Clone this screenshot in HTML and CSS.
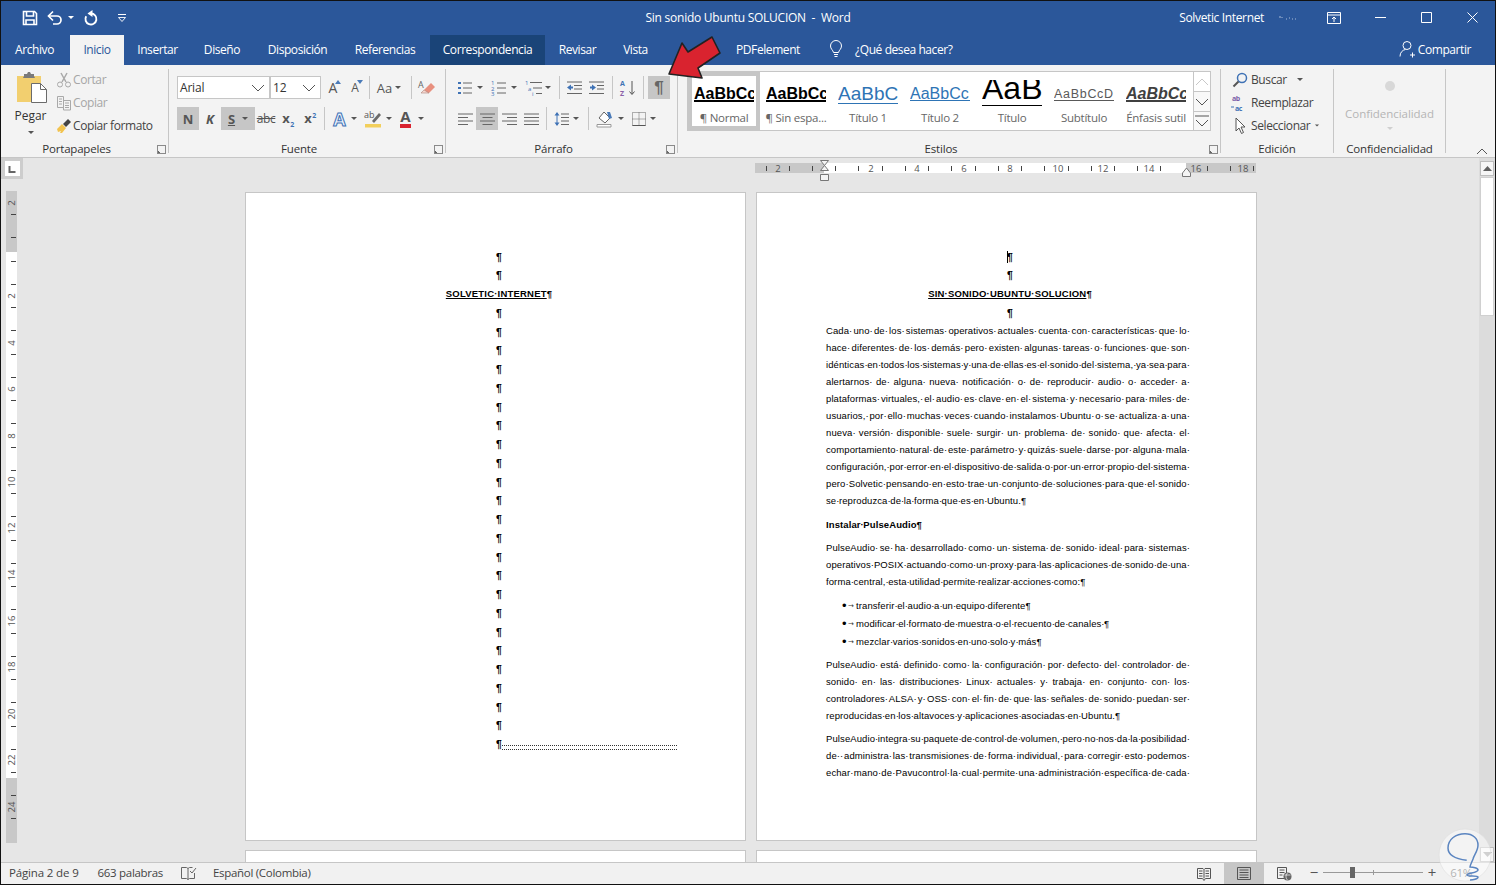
FILE: index.html
```html
<!DOCTYPE html>
<html lang="es">
<head>
<meta charset="utf-8">
<title>Sin sonido Ubuntu SOLUCION - Word</title>
<link rel="stylesheet" href="styles.css">
</head>
<body>
<div class="window">

  <header class="titlebar">
    <div class="qat">
      <span class="qbtn save"><svg width="16" height="16" viewBox="0 0 16 16"><path d="M1.500 1.500h11l2 2v11h-13z" fill="none" stroke="#fff" stroke-width="1.600"/><path d="M4.500 2v4h7V2M4 15v-5h8v5" fill="none" stroke="#fff" stroke-width="1.600"/></svg></span>
      <span class="qbtn undo"><svg width="16" height="16" viewBox="0 0 16 16"><path d="M2 6h8a4 4 0 0 1 0 8H6" fill="none" stroke="#fff" stroke-width="1.700"/><path d="M6 1.500 1.500 6 6 10.500" fill="none" stroke="#fff" stroke-width="1.700"/></svg></span>
      <i class="caret white"></i>
      <span class="qbtn redo"><svg width="16" height="16" viewBox="0 0 16 16"><path d="M8 3.500A5.500 5.500 0 1 1 3.200 6.200" fill="none" stroke="#fff" stroke-width="1.900"/><path d="M9.500 0v7L4.500 3.500z" fill="#fff"/></svg></span>
      <span class="qbtn custom"><svg width="10" height="10" viewBox="0 0 10 10"><path d="M1 1.500h8" stroke="#fff"/><path d="M1.500 4.500h7L5 8.500z" fill="none" stroke="#fff" stroke-width=".9"/></svg></span>
    </div>
    <div class="doc-title">Sin sonido Ubuntu SOLUCION &nbsp;-&nbsp; Word</div>
    <div class="winbar">
      <span class="user">Solvetic Internet</span>
      <svg class="blur" width="18" height="6" viewBox="0 0 18 6"><path d="M1 1v2M3 2v1M7 4h1M10 3h1M13 4h1M16 4h1" stroke="#a9bcd8"/></svg>
      <span class="wbtn"><svg width="14" height="12" viewBox="0 0 14 12"><path d="M.5.500h13v11H.5zM1 3h12" fill="none" stroke="#fff"/><path d="M7 10V5M5 7l2-2 2 2" fill="none" stroke="#fff"/></svg></span>
      <span class="wbtn"><svg width="11" height="11" viewBox="0 0 11 11"><path d="M0 5.500h11" stroke="#fff"/></svg></span>
      <span class="wbtn"><svg width="11" height="11" viewBox="0 0 11 11"><path d="M.5.500h10v10H.5z" fill="none" stroke="#fff"/></svg></span>
      <span class="wbtn"><svg width="11" height="11" viewBox="0 0 11 11"><path d="M.5.500l10 10M10.500.500l-10 10" fill="none" stroke="#fff"/></svg></span>
    </div>
  </header>

  <nav class="tabs">
    <span class="tab t-archivo">Archivo</span>
    <span class="tab t-inicio active">Inicio</span>
    <span class="tab t-insertar">Insertar</span>
    <span class="tab t-diseno">Diseño</span>
    <span class="tab t-disp">Disposición</span>
    <span class="tab t-ref">Referencias</span>
    <span class="tab t-corr current">Correspondencia</span>
    <span class="tab t-rev">Revisar</span>
    <span class="tab t-vista">Vista</span>
    <span class="tab t-pdf">PDFelement</span>
    <span class="tell">
      <svg width="14" height="18" viewBox="0 0 14 18"><path d="M4.500 12.500C4 10 1.500 9 1.500 6a5.500 5.500 0 0 1 11 0c0 3-2.500 4-3 6.500zM5 14.500h4M5.500 16.500h3" fill="none" stroke="#fff"/></svg>
      <span>¿Qué desea hacer?</span>
    </span>
    <span class="share">
      <svg width="16" height="18" viewBox="0 0 16 18"><circle cx="8" cy="5.500" r="4" fill="none" stroke="#fff"/><path d="M1 16.500c0-4 2.500-6.500 5.500-7M11 15h5M13.500 12.500v5" fill="none" stroke="#fff"/></svg>
      <span>Compartir</span>
    </span>
  </nav>

  <section class="ribbon">
    <div class="group g-clip">
      <div class="clip-body">
        <div class="paste">
          <svg class="paste-icon" width="32" height="34" viewBox="0 0 32 34"><path d="M1 4h24v26H1z" fill="#f2cf6f"/><path d="M8 4V2h3l1-2h2l1 2h3v2l1 2H7z" fill="#7a7a7a"/><path d="M15.500 11.500h9l6 6v13h-15z" fill="#fff" stroke="#6b6b6b"/><path d="M24.500 11.500v6h6" fill="none" stroke="#6b6b6b"/></svg>
          <span class="paste-label">Pegar</span>
          <i class="caret"></i>
        </div>
        <div class="small-list">
          <div class="small off"><svg width="16" height="16" viewBox="0 0 16 16"><path d="M5 1l5 9M11 1 6 10" stroke="#a9a9a9" stroke-width="1.500" fill="none"/><circle cx="4" cy="12.500" r="2.500" fill="none" stroke="#a9a9a9"/><circle cx="12" cy="12.500" r="2.500" fill="none" stroke="#a9a9a9"/></svg><span>Cortar</span></div>
          <div class="small off"><svg width="16" height="16" viewBox="0 0 16 16"><path d="M1.500 1.500h6v11h-6zM7.500 5.500h7v9.500h-7zM3 4h3M3 6.500h3M3 9h3M9 8h4M9 10.500h4M9 12.500h4" fill="none" stroke="#a9a9a9"/></svg><span>Copiar</span></div>
          <div class="small"><svg width="16" height="16" viewBox="0 0 16 16"><path d="M1 11l5-5 4 4-4 5H4l1-2-3 1z" fill="#f2c34f"/><path d="M7 6l5-5 3 3-5 5z" fill="#444"/></svg><span>Copiar formato</span></div>
        </div>
      </div>
      <div class="glabel has-launch">Portapapeles<i class="launch"></i></div>
    </div>

    <div class="group g-font">
      <div class="rows">
        <div class="row">
          <div class="combo c-font">Arial<svg width="14" height="8" viewBox="0 0 14 8"><path d="M1 1l6 6 6-6" fill="none" stroke="#555"/></svg></div>
          <div class="combo c-size">12<svg width="14" height="8" viewBox="0 0 14 8"><path d="M1 1l6 6 6-6" fill="none" stroke="#555"/></svg></div>
          <span class="btn"><span class="grow-a">A</span><svg class="mark" width="6" height="4" viewBox="0 0 6 4"><path d="M0 4l3-4 3 4z" fill="#4a7ab8"/></svg></span>
          <span class="btn"><span class="shrink-a">A</span><svg class="mark" width="6" height="4" viewBox="0 0 6 4"><path d="M0 0l3 4 3-4z" fill="#4a7ab8"/></svg></span>
          <i class="vsep s-a"></i>
          <span class="btn b-aa"><span class="aa">Aa</span><i class="caret"></i></span>
          <i class="vsep s-b"></i>
          <span class="btn"><svg width="18" height="16" viewBox="0 0 18 16"><path d="M6 10l7-7 4 4-6 6H9z" fill="#e8907f"/><path d="M3 13l3-3 5 3H7z" fill="#f6d8d0" stroke="#b0837a" stroke-width=".6"/><text x="0" y="8" class="svg-a">A</text></svg></span>
        </div>
        <div class="row">
          <span class="btn on fmt bold-n">N</span>
          <span class="btn fmt ital">K</span>
          <span class="btn on b-s"><span class="fmt under">S</span><i class="caret"></i></span>
          <span class="btn fmt-small strike">abc</span>
          <span class="btn fmt-small"><span>x<sub class="blue-sub">2</sub></span></span>
          <span class="btn fmt-small"><span>x<sup class="blue-sub">2</sup></span></span>
          <i class="vsep s-c"></i>
          <span class="btn b-eff"><span class="eff">A</span><i class="caret"></i></span>
          <span class="btn b-high"><svg width="18" height="18" viewBox="0 0 18 18"><text x="0" y="8" class="svg-ab">ab</text><path d="M8 11l7-8 2 2-7 8z" fill="#6b6b6b"/><path d="M1 14h16v3.500H1z" fill="#f2cf5b"/></svg><i class="caret"></i></span>
          <span class="btn b-color"><span class="colora">A</span><i class="caret"></i></span>
        </div>
      </div>
      <div class="glabel has-launch">Fuente<i class="launch"></i></div>
    </div>

    <div class="group g-par">
      <div class="rows">
        <div class="row">
          <span class="btn b-list"><svg width="16" height="16" viewBox="0 0 16 16"><path d="M1 2h3v2H1zM1 7h3v2H1zM1 12h3v2H1z" fill="#3f72b5"/><path d="M6 3h9M6 8h9M6 13h9" stroke="#666"/></svg><i class="caret"></i></span>
          <span class="btn b-list"><svg width="16" height="16" viewBox="0 0 16 16"><text x="0" y="5" class="svg-num">1</text><text x="0" y="10.500" class="svg-num">2</text><text x="0" y="16" class="svg-num">3</text><path d="M6 3h9M6 8h9M6 13h9" stroke="#666"/></svg><i class="caret"></i></span>
          <span class="btn b-list3"><svg width="17" height="16" viewBox="0 0 17 16"><text x="0" y="5" class="svg-num">1</text><text x="3" y="10.500" class="svg-num">a</text><text x="7" y="16" class="svg-num">i</text><path d="M5 2.500h12M8 8h9M11 13.500h6" stroke="#666"/></svg><i class="caret"></i></span>
          <i class="vsep s-d"></i>
          <span class="btn"><svg width="16" height="14" viewBox="0 0 16 14"><path d="M1 1h15M8 4.500h8M8 8h8M1 12.500h15" stroke="#666"/><path d="M1 6.500 5 3.500v2h2v2H5v2z" fill="#3f72b5"/></svg></span>
          <span class="btn b-inc"><svg width="16" height="14" viewBox="0 0 16 14"><path d="M0 1h15M8 4.500h7M8 8h7M0 12.500h15" stroke="#666"/><path d="M7 6.500 3 3.500v2H1v2h2v2z" fill="#3f72b5"/></svg></span>
          <i class="vsep s-e"></i>
          <span class="btn b-sort"><svg width="16" height="18" viewBox="0 0 16 18"><text x="0" y="7" class="svg-az a">A</text><text x="0" y="17" class="svg-az z">Z</text><path d="M12 2v13M9.500 12.500 12 15.500l2.500-3" fill="none" stroke="#555"/></svg></span>
          <i class="vsep s-f"></i>
          <span class="btn on pil">¶</span>
        </div>
        <div class="row r-align">
          <span class="btn"><svg width="15" height="12" viewBox="0 0 15 12"><path d="M0 1h15M0 4.500h10M0 8h15M0 11.500h10" stroke="#666"/></svg></span>
          <span class="btn on"><svg width="15" height="12" viewBox="0 0 15 12"><path d="M0 1h15M2.500 4.500h10M0 8h15M2.500 11.500h10" stroke="#666"/></svg></span>
          <span class="btn"><svg width="15" height="12" viewBox="0 0 15 12"><path d="M0 1h15M5 4.500h10M0 8h15M5 11.500h10" stroke="#666"/></svg></span>
          <span class="btn"><svg width="15" height="12" viewBox="0 0 15 12"><path d="M0 1h15M0 4.500h15M0 8h15M0 11.500h15" stroke="#666"/></svg></span>
          <i class="vsep s-g"></i>
          <span class="btn b-list3"><svg width="16" height="16" viewBox="0 0 16 16"><path d="M3 2v12" stroke="#3f72b5"/><path d="M.5 4.500 3 1l2.500 3.500zM.5 11.500 3 15l2.500-3.500z" fill="#3f72b5"/><path d="M7 3h8M7 6.500h8M7 10h8M7 13.500h8" stroke="#666"/></svg><i class="caret"></i></span>
          <i class="vsep s-h"></i>
          <span class="btn b-list"><svg width="18" height="18" viewBox="0 0 18 18"><path d="M3 8l5-6 6 6-5 5z" fill="#fff" stroke="#666"/><path d="M11 2h3l2 6-3 1z" fill="#4a7ab8"/><path d="M1 14.500h14v2.500H1z" fill="#fff" stroke="#999"/></svg><i class="caret"></i></span>
          <span class="btn b-list"><svg width="14" height="14" viewBox="0 0 14 14"><path d="M.5.500h13v13H.5zM7 .5v13M.5 7h13" fill="none" stroke="#666" stroke-dasharray="1 1"/><path d="M.5 13.500h13" stroke="#555"/></svg><i class="caret"></i></span>
        </div>
      </div>
      <div class="glabel has-launch">Párrafo<i class="launch"></i></div>
    </div>

    <div class="group g-styles">
      <div class="gallery">
        <div class="styles-list">
          <div class="style selected"><div class="pv pv-normal">AaBbCc</div><div class="sl">¶ Normal</div></div>
          <div class="style"><div class="pv pv-normal">AaBbCc</div><div class="sl">¶ Sin espa...</div></div>
          <div class="style"><div class="pv pv-t1">AaBbC</div><div class="sl">Título 1</div></div>
          <div class="style"><div class="pv pv-t2">AaBbCc</div><div class="sl">Título 2</div></div>
          <div class="style"><div class="pv pv-title">AaB</div><div class="sl">Título</div></div>
          <div class="style"><div class="pv pv-sub">AaBbCcD</div><div class="sl">Subtítulo</div></div>
          <div class="style"><div class="pv pv-em">AaBbCc</div><div class="sl">Énfasis sutil</div></div>
        </div>
        <div class="gscroll">
          <span class="gs up"><svg width="14" height="8" viewBox="0 0 14 8"><path d="M1 7l6-6 6 6" fill="none" stroke="#c8c8c8"/></svg></span>
          <span class="gs"><svg width="14" height="8" viewBox="0 0 14 8"><path d="M1 1l6 6 6-6" fill="none" stroke="#555"/></svg></span>
          <span class="gs"><svg width="14" height="12" viewBox="0 0 14 12"><path d="M0 1h14M1 5l6 6 6-6" fill="none" stroke="#555"/></svg></span>
        </div>
      </div>
      <div class="glabel has-launch">Estilos<i class="launch"></i></div>
    </div>

    <div class="group g-edit">
      <div class="edit-list">
        <div class="small"><svg width="16" height="16" viewBox="0 0 16 16"><circle cx="10" cy="6" r="4.500" fill="none" stroke="#3f72b5" stroke-width="1.500"/><path d="M6.500 9.500 1.500 14.500" stroke="#555" stroke-width="2"/></svg><span>Buscar</span><i class="caret c-buscar"></i></div>
        <div class="small"><svg width="18" height="18" viewBox="0 0 18 18"><text x="1" y="7" class="svg-rep p">ab</text><text x="4" y="17" class="svg-rep b">ac</text><path d="M0 13h3" stroke="#3f72b5"/></svg><span>Reemplazar</span></div>
        <div class="small"><svg width="14" height="18" viewBox="0 0 14 18"><path d="M3 1v13l3-3 2.500 5.500 2-1L8 10h4z" fill="#fff" stroke="#555"/></svg><span>Seleccionar</span><i class="caret c-sel"></i></div>
      </div>
      <div class="glabel">Edición</div>
    </div>

    <div class="group g-conf">
      <div class="conf-body">
        <i class="dot"></i>
        <span class="conf-text">Confidencialidad</span>
        <i class="caret pale"></i>
      </div>
      <div class="glabel">Confidencialidad</div>
    </div>
    <svg class="collapse" width="12" height="7" viewBox="0 0 12 7"><path d="M1 6l5-5 5 5" fill="none" stroke="#555"/></svg>
  </section>

  <main class="workspace">
    <svg class="vruler" width="22" height="704" viewBox="1 158 22 704">
      <rect x="1" y="158" width="22" height="21" fill="#cdcdcd"/>
      <rect x="5" y="161" width="15" height="15" fill="#fff"/>
      <path d="M9.500 166v6h6" fill="none" stroke="#666" stroke-width="2"/>
      <rect x="6" y="191" width="11" height="652" fill="#c8c8c8"/>
      <rect x="6" y="252" width="11" height="526" fill="#fff"/>
      <path stroke="#444" d="M11 214.500h5M11 237.500h5M11 261.500h5M11 284.500h5M11 307.500h5M11 330.500h5M11 354.500h5M11 377.500h5M11 400.500h5M11 423.500h5M11 447.500h5M11 470.500h5M11 493.500h5M11 516.500h5M11 540.500h5M11 563.500h5M11 586.500h5M11 609.500h5M11 633.500h5M11 656.500h5M11 679.500h5M11 702.500h5M11 726.500h5M11 749.500h5M11 772.500h5M11 795.500h5M11 818.500h5"/>
      <g class="rtext">
        <text transform="translate(15 203) rotate(-90)">2</text>
        <text transform="translate(15 296) rotate(-90)">2</text>
        <text transform="translate(15 343) rotate(-90)">4</text>
        <text transform="translate(15 389) rotate(-90)">6</text>
        <text transform="translate(15 436) rotate(-90)">8</text>
        <text transform="translate(15 482) rotate(-90)">10</text>
        <text transform="translate(15 528) rotate(-90)">12</text>
        <text transform="translate(15 575) rotate(-90)">14</text>
        <text transform="translate(15 621) rotate(-90)">16</text>
        <text transform="translate(15 667) rotate(-90)">18</text>
        <text transform="translate(15 714) rotate(-90)">20</text>
        <text transform="translate(15 760) rotate(-90)">22</text>
        <text transform="translate(15 807) rotate(-90)">24</text>
      </g>
    </svg>

    <div class="doc">
      <div class="sheet-grid ruler-row">
        <svg class="hruler" width="502" height="34" viewBox="755 158 502 34">
          <rect x="755" y="163" width="501" height="10" fill="#c8c8c8"/>
          <rect x="824" y="163" width="362" height="10" fill="#fff"/>
          <path stroke="#444" d="M766.500 166v5M789.500 166v5M812.500 166v5M835.500 166v5M858.500 166v5M882.500 166v5M905.500 166v5M928.500 166v5M951.500 166v5M975.500 166v5M998.500 166v5M1021.500 166v5M1044.500 166v5M1068.500 166v5M1091.500 166v5M1114.500 166v5M1137.500 166v5M1160.500 166v5M1207.500 166v5M1230.500 166v5M1253.500 166v5"/>
          <g class="rtext mid">
            <text x="778" y="172">2</text><text x="871" y="172">2</text><text x="917" y="172">4</text><text x="964" y="172">6</text><text x="1010" y="172">8</text><text x="1058" y="172">10</text><text x="1103" y="172">12</text><text x="1149" y="172">14</text><text x="1196" y="172">16</text><text x="1243" y="172">18</text>
          </g>
          <path d="M820.500 160.500h8l-4 5zM824.500 165.500l-4 5h8z" fill="#f4f4f4" stroke="#777"/>
          <path d="M820.500 174.500h8v6h-8z" fill="#f4f4f4" stroke="#777"/>
          <path d="M1186.500 168l4 5v3.500h-8V173z" fill="#f4f4f4" stroke="#777"/>
        </svg>
      </div>
      <div class="sheet-grid pages">
        <article class="page">
          <div class="body centered">
            <div class="pl">¶</div>
            <div class="pl">¶</div>
            <div class="pl title-line"><u>SOLVETIC·INTERNET</u>¶</div>
            <div class="pl">¶</div><div class="pl">¶</div><div class="pl">¶</div><div class="pl">¶</div><div class="pl">¶</div>
            <div class="pl">¶</div><div class="pl">¶</div><div class="pl">¶</div><div class="pl">¶</div><div class="pl">¶</div>
            <div class="pl">¶</div><div class="pl">¶</div><div class="pl">¶</div><div class="pl">¶</div><div class="pl">¶</div>
            <div class="pl">¶</div><div class="pl">¶</div><div class="pl">¶</div><div class="pl">¶</div><div class="pl">¶</div>
            <div class="pl">¶</div><div class="pl">¶</div><div class="pl">¶</div>
            <div class="pl"><span class="section-break">¶</span></div>
          </div>
        </article>
        <article class="page">
          <div class="body">
            <div class="centered">
              <div class="pl"><i class="cursor"></i>¶</div>
              <div class="pl">¶</div>
              <div class="pl title-line"><u>SIN·SONIDO·UBUNTU·SOLUCION</u>¶</div>
              <div class="pl">¶</div>
            </div>
            <div class="para first">
              <div class="jl">Cada· uno· de· los· sistemas· operativos· actuales· cuenta· con· características· que· lo·</div>
              <div class="jl">hace· diferentes· de· los· demás· pero· existen· algunas· tareas· o· funciones· que· son·</div>
              <div class="jl">idénticas· en· todos· los· sistemas· y· una· de· ellas· es· el· sonido· del· sistema,· ya· sea· para·</div>
              <div class="jl">alertarnos· de· alguna· nueva· notificación· o· de· reproducir· audio· o· acceder· a·</div>
              <div class="jl">plataformas· virtuales,· el· audio· es· clave· en· el· sistema· y· necesario· para· miles· de·</div>
              <div class="jl">usuarios,· por· ello· muchas· veces· cuando· instalamos· Ubuntu· o· se· actualiza· a· una·</div>
              <div class="jl">nueva· versión· disponible· suele· surgir· un· problema· de· sonido· que· afecta· el·</div>
              <div class="jl">comportamiento· natural· de· este· parámetro· y· quizás· suele· darse· por· alguna· mala·</div>
              <div class="jl">configuración,· por· error· en· el· dispositivo· de· salida· o· por· un· error· propio· del· sistema·</div>
              <div class="jl">pero· Solvetic· pensando· en· esto· trae· un· conjunto· de· soluciones· para· que· el· sonido·</div>
              <div class="ll">se· reproduzca· de· la· forma· que· es· en· Ubuntu.¶</div>
            </div>
            <div class="para gap"><div class="ll heading">Instalar· PulseAudio¶</div></div>
            <div class="para gap">
              <div class="jl">PulseAudio· se· ha· desarrollado· como· un· sistema· de· sonido· ideal· para· sistemas·</div>
              <div class="jl">operativos· POSIX· actuando· como· un· proxy· para· las· aplicaciones· de· sonido· de· una·</div>
              <div class="ll">forma· central,· esta· utilidad· permite· realizar· acciones· como:¶</div>
            </div>
            <ul class="bullets">
              <li>transferir· el· audio· a· un· equipo· diferente¶</li>
              <li>modificar· el· formato· de· muestra· o· el· recuento· de· canales· ¶</li>
              <li>mezclar· varios· sonidos· en· uno· solo· y· más¶</li>
            </ul>
            <div class="para gap">
              <div class="jl">PulseAudio· está· definido· como· la· configuración· por· defecto· del· controlador· de·</div>
              <div class="jl">sonido· en· las· distribuciones· Linux· actuales· y· trabaja· en· conjunto· con· los·</div>
              <div class="jl">controladores· ALSA· y· OSS· con· el· fin· de· que· las· señales· de· sonido· puedan· ser·</div>
              <div class="ll">reproducidas· en· los· altavoces· y· aplicaciones· asociadas· en· Ubuntu.¶</div>
            </div>
            <div class="para gap">
              <div class="jl">PulseAudio· integra· su· paquete· de· control· de· volumen,· pero· no· nos· da· la· posibilidad·</div>
              <div class="jl">de·· administra· las· transmisiones· de· forma· individual,· para· corregir· esto· podemos·</div>
              <div class="jl">echar· mano· de· Pavucontrol· la· cual· permite· una· administración· específica· de· cada·</div>
            </div>
          </div>
        </article>
        <article class="page"></article>
        <article class="page"></article>
      </div>
    </div>

    <aside class="vscroll">
      <span class="sb-btn"><svg width="9" height="5" viewBox="0 0 9 5"><path d="M0 5l4.500-5L9 5z" fill="#606060"/></svg></span>
      <span class="sb-thumb"></span>
      <span class="sb-btn down"><svg width="9" height="5" viewBox="0 0 9 5"><path d="M0 0l4.500 5L9 0z" fill="#a0a0a0"/></svg></span>
    </aside>
  </main>

  <footer class="status">
    <span class="st st-page">Página 2 de 9</span>
    <span class="st st-words">663 palabras</span>
    <svg class="st-proof" width="16" height="14" viewBox="0 0 16 14"><path d="M.5 1.500h5l1.500 1v11L5.500 12.500h-5zM7 2.500l1.500-1h3M7 13.500l1.500-1h5V7" fill="none" stroke="#666"/><path d="M9 5l2 2 4-5" fill="none" stroke="#666"/></svg>
    <span class="st st-lang">Español (Colombia)</span>
    <span class="views">
      <span class="view"><svg width="14" height="14" viewBox="0 0 14 14"><path d="M.5 1.500h5.500l1 1 1-1h5.500v10h-5l-1.500 2-1.500-2h-5zM7 2.500v9M2 4h3.500M2 6.500h3.500M2 9h3.500M8.500 4H12M8.500 6.500H12M8.500 9H12" fill="none" stroke="#555"/></svg></span>
      <span class="view on"><svg width="14" height="13" viewBox="0 0 14 13"><path d="M.5.500h13v12H.5zM2.500 3h9M2.500 5.500h9M2.500 8h9M2.500 10.500h9" fill="none" stroke="#555"/></svg></span>
      <span class="view"><svg width="15" height="14" viewBox="0 0 15 14"><path d="M8 11.500H.5V.5h9V6M2.500 3h5M2.500 5.500h5M2.500 8h3" fill="none" stroke="#555"/><circle cx="10.500" cy="9.500" r="4" fill="#666"/><path d="M7.500 8h6M10.500 6c-2 2-2 5 0 7" stroke="#fff" fill="none" stroke-width=".7"/></svg></span>
    </span>
    <span class="zoombar">
      <span class="zsign">−</span>
      <span class="slider"><i class="ztick"></i><i class="zthumb"></i></span>
      <span class="zsign">+</span>
      <span class="zpct">61%</span>
    </span>
  </footer>

  <svg class="arrow" width="56" height="46" viewBox="666 35 56 46"><path d="M669 74 682 43l6 9 24-15 8 16-22 15 4 10z" fill="#d9232f" stroke="#222" stroke-width="1.600" stroke-linejoin="round"/></svg>

  <svg class="stamp" width="54" height="54" viewBox="0 0 54 54"><circle cx="27" cy="27" r="26" fill="#fff" fill-opacity=".5" stroke="#ddd" stroke-opacity=".6"/><path d="M28.700 32.300C18 31 10 28 10 20 10 11 18 5.700 27 5.700c8 0 13 5 13 11.300 0 6-4 10-5 14-1 3-3 6-3 8 3 0 8 1 8 3 0 3-11 3-11 5 0 2 11 0 11 2 0 2-5 3-8 3" fill="none" stroke="#5b85c0" stroke-width="1.500"/></svg>
</div>
</body>
</html>
```

FILE: styles.css
```css
* { box-sizing: border-box; }
html, body { margin: 0; padding: 0; overflow: hidden; }
body { font-family: "Open Sans", "Noto Sans", sans-serif; font-size: 12px; color: #444; background: #000; }
i { display: block; font-style: normal; }
svg { display: block; flex: none; overflow: visible; }

.window { position: relative; width: 1496px; height: 885px; border: 1px solid #111; display: flex; flex-direction: column; background: #e6e6e6; overflow: hidden; }

/* title bar */
.titlebar { height: 34px; background: #2b579a; color: #fff; display: grid; grid-template-columns: 1fr auto 1fr; align-items: center; flex: none; padding-bottom: 1px; }
.qat { display: flex; align-items: center; padding-left: 18px; }
.qbtn { width: 22px; height: 24px; display: flex; align-items: center; justify-content: center; }
.qbtn.undo { margin-left: 3px; width: 22px; }
.qbtn.redo { margin-left: 6px; }
.qbtn.custom { margin-left: 9px; }
.doc-title { font-size: 12px; letter-spacing: -.25px; white-space: nowrap; }
.winbar { display: flex; align-items: center; justify-content: flex-end; }
.user { letter-spacing: -.35px; margin-right: 15px; }
.blur { margin-right: 14px; }
.wbtn { width: 46px; height: 33px; display: flex; align-items: center; justify-content: center; }

/* tabs */
.tabs { height: 30px; flex: none; background: #2b579a; color: #fff; display: flex; align-items: center; letter-spacing: -.42px; }
.tab { height: 30px; padding-bottom: 2px; display: flex; align-items: center; justify-content: center; white-space: nowrap; }
.tab.active { background: #f3f3f3; color: #2b579a; }
.tab.current { background: #1a4478; }
.t-archivo { width: 69px; padding-right: 2px; }
.t-inicio { width: 54px; }
.t-insertar { width: 67px; }
.t-diseno { width: 62px; }
.t-disp { width: 89px; }
.t-ref { width: 86px; }
.t-corr { width: 115px; margin-left: 2px; }
.t-rev { width: 65px; }
.t-vista { width: 51px; }
.t-pdf { width: 90px; margin-left: 62px; }
.tell { display: flex; align-items: center; gap: 12px; margin-left: 16px; padding-bottom: 2px; }
.share { display: flex; align-items: center; gap: 3px; margin-left: auto; margin-right: 24px; padding-bottom: 2px; }

/* ribbon */
.ribbon { position: relative; height: 93px; flex: none; background: #f3f3f3; border-bottom: 1px solid #c6c6c6; display: flex; align-items: flex-start; }
.group { height: 84px; margin-top: 4px; border-right: 1px solid #c6c6c6; display: flex; flex-direction: column; flex: none; }
.g-clip { width: 168px; }
.g-font { width: 277px; }
.g-par { width: 232px; }
.g-styles { width: 543px; }
.g-edit { width: 113px; }
.g-conf { width: 112px; }
.glabel { position: relative; height: 14px; margin-top: auto; margin-bottom: -3px; line-height: 14px; text-align: center; color: #333; letter-spacing: -.2px; font-size: 11.500px; }
.has-launch { padding-right: 16px; }
.launch { position: absolute; right: 2px; top: 3px; width: 9px; height: 9px; border: 1px solid #8a8a8a; background: linear-gradient(45deg, #666 0 20%, transparent 20%); }
.caret { width: 0; height: 0; border: 3px solid transparent; border-top: 3.500px solid #555; border-bottom: 0; flex: none; }
.caret.white { border-top-color: #fff; margin-left: 2px; }
.caret.pale { border-top-color: #cfcfcf; }

/* clipboard */
.clip-body { display: flex; }
.paste { width: 58px; display: flex; flex-direction: column; align-items: center; padding-top: 3px; padding-left: 1px; }
.paste-icon { margin-left: 3px; }
.paste-label { line-height: 18px; margin-top: 1px; color: #333; }
.paste .caret { margin-top: 6px; }
.small-list { display: flex; flex-direction: column; margin-left: -4px; margin-top: -1px; }
.small { height: 23px; display: flex; align-items: center; gap: 0; color: #444; letter-spacing: -.4px; white-space: nowrap; }
.small svg { width: 18px; padding: 0 1px; }
.small.off { color: #a6a6a6; }

/* rows of buttons */
.rows { display: flex; flex-direction: column; gap: 8px; padding-top: 7px; }
.row { display: flex; align-items: center; height: 23px; }
.g-font .rows { padding-left: 8px; }
.g-par .rows { padding-left: 7px; }
.r-align { padding-left: 1px; }
.btn { position: relative; width: 22px; height: 23px; display: flex; align-items: center; justify-content: center; flex: none; color: #555; }
.btn.on { background: #c6c6c6; }
.vsep { width: 1px; height: 23px; background: #c6c6c6; flex: none; }
.combo { height: 23px; background: #fff; border: 1px solid #c6c6c6; display: flex; align-items: center; justify-content: space-between; padding: 0 4px 0 2px; color: #333; letter-spacing: -.2px; }
.c-font { width: 93px; }
.c-size { width: 51px; margin-right: 1px; }
.mark { position: absolute; right: 3px; top: 4px; }
.grow-a { font-size: 14px; }
.shrink-a { font-size: 12px; }
.s-a { margin-left: 3px; margin-right: 4px; }
.b-aa { width: 30px; gap: 3px; }
.aa { font-size: 13px; }
.s-b { margin-left: 7px; margin-right: 4px; }
.fmt { font-weight: 700; font-size: 13px; color: #555; }
.ital { font-style: italic; }
.under { text-decoration: underline; }
.b-s { width: 34px; gap: 7px; }
.fmt-small { font-weight: 700; font-size: 13px; letter-spacing: -.4px; line-height: 1; }
.strike { text-decoration: line-through; font-weight: 400; font-size: 12px; }
.blue-sub { font-size: 7px; color: #3f72b5; line-height: 0; margin-left: 1px; }
.s-c { margin-left: 3px; margin-right: 4px; }
.b-eff { width: 32px; gap: 5px; }
.eff { font-size: 18px; font-weight: 700; color: #eaf1fb; -webkit-text-stroke: 1px #3f72b5; line-height: 1; }
.b-high { width: 34px; gap: 4px; }
.b-color { width: 34px; gap: 7px; }
.colora { font-size: 15px; font-weight: 700; color: #555; border-bottom: 4px solid #d9232f; line-height: 15px; height: 19px; }
.svg-a { font: 9px "Open Sans", sans-serif; fill: #666; }
.svg-ab { font: 9px "Open Sans", sans-serif; fill: #555; }
.svg-num { font: 6px "Open Sans", sans-serif; fill: #3f72b5; }
.svg-az { font: 700 7px "Open Sans", sans-serif; }
.svg-az.a { fill: #3f72b5; }
.svg-az.z { fill: #8a5fa8; }
.svg-rep { font: 700 7px "Open Sans", sans-serif; }
.svg-rep.p { fill: #7a5ea8; }
.svg-rep.b { fill: #3f72b5; }
.b-list { width: 34px; gap: 4px; }
.b-list3 { width: 33px; gap: 3px; }
.b-inc { margin-left: 1px; }
.s-d { margin-left: 5px; margin-right: 3px; }
.s-e { margin-left: 4px; margin-right: 4px; }
.s-f { margin-left: 4px; margin-right: 4px; }
.pil { font-family: "Liberation Sans", sans-serif; font-size: 17px; font-weight: 700; color: #666; }
.s-g { margin-left: 4px; margin-right: 3px; }
.s-h { margin-left: 5px; margin-right: 4px; }

/* styles gallery */
.gallery { margin: 2px 0 0 9px; width: 524px; height: 60px; background: #fff; border: 1px solid #c6c6c6; display: flex; justify-content: space-between; }
.styles-list { display: flex; }
.style { width: 72px; height: 58px; display: flex; flex-direction: column; align-items: center; overflow: hidden; }
.style.selected { box-shadow: inset 0 0 0 4px #c6c6c6; }
.pv { width: 60px; height: 31px; margin-top: 4px; flex: none; overflow: hidden; white-space: nowrap; font-family: "Liberation Sans", sans-serif; display: flex; align-items: flex-end; color: #000; }
.pv-normal { font-size: 16px; font-weight: 700; line-height: 19px; padding-bottom: 4px; background: linear-gradient(#000, #000) 0 24px / 100% 2px no-repeat; }
.pv-t1 { font-size: 19px; color: #2e74b5; line-height: 22px; padding-bottom: 2px; background: linear-gradient(#2e74b5, #2e74b5) 0 27px / 100% 1px no-repeat; }
.pv-t2 { font-size: 16px; color: #2e74b5; line-height: 19px; padding-bottom: 4px; background: linear-gradient(#2e74b5, #2e74b5) 0 24px / 100% 1px no-repeat; }
.pv-title { font-size: 32px; line-height: 33px; height: 27px; margin-top: 8px; padding-bottom: 2px; background: linear-gradient(#000, #000) 0 25px / 100% 1px no-repeat; }
.pv-sub { font-size: 12.500px; color: #595959; letter-spacing: .7px; line-height: 16px; padding-bottom: 5px; background: linear-gradient(#595959, #595959) 0 24px / 100% 1px no-repeat; }
.pv-em { font-size: 16px; font-style: italic; font-weight: 700; color: #404040; line-height: 19px; padding-bottom: 4px; background: linear-gradient(#404040, #404040) 0 24px / 100% 2px no-repeat; }
.sl { font-size: 11.500px; line-height: 16px; margin-top: 3px; color: #666; letter-spacing: -.25px; white-space: nowrap; }
.gscroll { width: 17px; display: flex; flex-direction: column; border-left: 1px solid #c6c6c6; }
.gs { height: 20px; display: flex; align-items: center; justify-content: center; border-bottom: 1px solid #c6c6c6; background: #f8f8f8; }
.gs:last-child { border-bottom: 0; flex: 1; }
.gs.up { background: #fff; }

/* editing */
.edit-list { display: flex; flex-direction: column; padding-left: 10px; margin-top: -1px; }
.edit-list .small { gap: 2px; }
.edit-list .small svg { width: 18px; padding: 0; }
.c-buscar { margin-left: 8px; }
.c-sel { margin-left: 2px; transform: scale(.7); }

/* confidentiality */
.conf-body { display: flex; flex-direction: column; align-items: center; padding-top: 12px; color: #b5b5b5; letter-spacing: -.05px; }
.dot { width: 10px; height: 10px; border-radius: 50%; background: #d8d8d8; }
.conf-text { margin-top: 15px; white-space: nowrap; font-size: 11.500px; }
.conf-body .caret { margin-top: 6px; }
.collapse { position: absolute; right: 7px; bottom: 2px; }

/* workspace */
.workspace { height: 704px; flex: none; display: flex; overflow: hidden; background: #e6e6e6; }
.vruler { width: 22px; }
.rtext text { font: 9.500px "Open Sans", sans-serif; fill: #555; text-anchor: middle; }
.doc { width: 1456px; flex: none; overflow: hidden; }
.sheet-grid { display: grid; grid-template-columns: 501px 501px; column-gap: 10px; justify-content: center; }
.ruler-row { height: 34px; }
.hruler { grid-column: 2; margin-left: -1px; }
.pages { row-gap: 9px; }
.page { height: 649px; background: #fff; border: 1px solid #c6c6c6; }

/* page text */
.body { width: 368px; margin: 54.600px 0 0 69px; font-family: "Liberation Sans", Arial, sans-serif; font-size: 9.500px; letter-spacing: .1px; color: #000; word-spacing: -3.260px; white-space: nowrap; }
.page .pl { height: 18.750px; line-height: 18.750px; text-align: center; font-weight: 700; font-size: 10.500px; }
.page .title-line { font-size: 9.500px; letter-spacing: .2px; }
.heading { font-weight: 700; }
.para { line-height: 17px; }
.para.first { margin-top: -.3px; }
.para.gap { margin-top: 6.500px; }
.jl { width: 364px; text-align: justify; text-align-last: justify; white-space: nowrap; height: 17px; }
.ll { height: 17px; }
.bullets { list-style: none; margin: 7px 0 0; padding: 0 0 0 16px; }
.bullets li { height: 18px; line-height: 18px; position: relative; padding-left: 14px; }
.bullets li::before { content: "•"; position: absolute; left: 0; top: 0; font-size: 13px; }
.bullets li::after { content: "→"; position: absolute; left: 6px; top: 0; font-family: "DejaVu Sans", sans-serif; font-size: 7px; color: #333; }
.bullets + .para.gap { margin-top: 4.500px; }
.cursor { display: inline-block; width: 1px; height: 12px; background: #000; vertical-align: -2px; margin-right: -1px; }
.section-break { position: relative; }
.section-break::after { content: ""; position: absolute; left: 100%; top: 7px; width: 175px; height: 3px; border-top: 1px dotted #333; border-bottom: 1px dotted #333; }

/* scrollbar */
.vscroll { width: 16px; flex: none; background: #dcdcdc; display: flex; flex-direction: column; padding: 3px 1px 0; }
.sb-btn { width: 14px; height: 15px; background: #f6f6f6; border: 1px solid #bdbdbd; display: flex; align-items: center; justify-content: center; flex: none; }
.sb-thumb { width: 14px; height: 139px; margin-top: 1px; background: #fff; border: 1px solid #d0d0d0; }
.sb-btn.down { margin-top: auto; }

/* status bar */
.status { height: 22px; flex: none; padding-bottom: 2px; background: #f1f1f1; border-top: 1px solid #c6c6c6; display: flex; align-items: center; color: #444; font-size: 11.500px; letter-spacing: -.3px; }
.st-page { margin-left: 8px; letter-spacing: -.15px; }
.st-words { margin-left: 19px; }
.st-proof { margin-left: 18px; }
.st-lang { margin-left: 16px; }
.views { display: flex; margin-left: auto; margin-top: 2px; }
.view { width: 40px; height: 21px; display: flex; align-items: center; justify-content: center; }
.view.on { background: #c6c6c6; }
.zoombar { display: flex; align-items: center; margin-left: 5px; margin-right: 23px; }
.zsign { font-size: 15px; line-height: 1; color: #555; width: 10px; text-align: center; }
.slider { position: relative; width: 100px; height: 1px; background: #999; margin: 0 4px; }
.ztick { position: absolute; left: 50px; top: -2px; width: 1px; height: 5px; background: #999; }
.zthumb { position: absolute; left: 27px; top: -5px; width: 5px; height: 11px; background: #666; }
.zpct { margin-left: 5px; width: 30px; text-align: right; color: #666; }

/* overlays */
.arrow { position: absolute; left: 665px; top: 34px; }
.stamp { position: absolute; left: 1437px; top: 827px; }
```
